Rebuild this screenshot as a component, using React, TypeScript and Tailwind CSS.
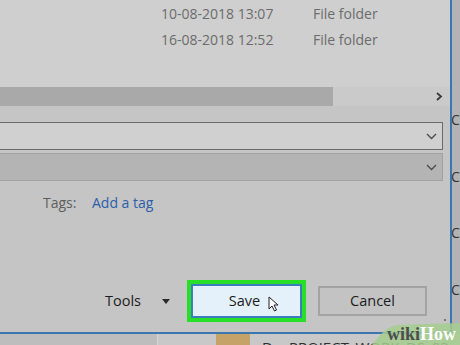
import React from "react";

const font = { fontFamily: '"Open Sans", "Noto Sans", "Liberation Sans", sans-serif' };

function ChevronDown() {
  return (
    <svg width="11" height="7" viewBox="0 0 11 7">
      <polyline points="1,1 5.5,5.5 10,1" fill="none" stroke="#4a4a4a" strokeWidth="1.3" />
    </svg>
  );
}

export default function App() {
  return (
    <div
      className="relative w-[460px] h-[345px] overflow-hidden bg-[#c6c6c6] flex flex-col"
      style={font}
    >
      <div className="flex h-[334px]">
        {/* Dialog */}
        <div className="w-[452px] h-[334px] border-r-2 border-b-2 border-[#3b77ae] bg-[#c5c5c5] flex flex-col">
          {/* file list */}
          <div className="h-[87px] bg-[#cfcfcf] pt-[4px] flex flex-col gap-[6px] text-[14px] text-[#6c6c6c]">
            <div className="flex h-[20px] leading-[20px] pl-[161px]">
              <span className="w-[152px]">10-08-2018 13:07</span>
              <span>File folder</span>
            </div>
            <div className="flex h-[20px] leading-[20px] pl-[161px]">
              <span className="w-[152px]">16-08-2018 12:52</span>
              <span>File folder</span>
            </div>
          </div>
          {/* scrollbar */}
          <div className="h-[19px] flex">
            <div className="w-[333px] bg-[#a9a9a9]" />
            <div className="flex-1 bg-[#cacaca] flex items-center justify-end pr-[7px]">
              <svg width="7" height="9" viewBox="0 0 7 9">
                <polyline points="1,1 5,4.5 1,8" fill="none" stroke="#3a3a3a" strokeWidth="1.8" />
              </svg>
            </div>
          </div>
          {/* combos */}
          <div className="mt-[16px] w-[443px] h-[28px] border border-l-0 border-[#6b6b6b] bg-[#d0d0d0] flex items-center justify-end pr-[5px]">
            <ChevronDown />
          </div>
          <div className="mt-[3px] w-[443px] h-[28px] border border-l-0 border-[#a2a2a2] bg-[#b4b4b4] flex items-center justify-end pr-[5px]">
            <ChevronDown />
          </div>
          {/* tags */}
          <div className="mt-[12px] h-[20px] flex items-center pl-[43px] text-[14px] leading-[20px]">
            <span className="w-[49px] text-[#5e5e5e]">Tags:</span>
            <span className="text-[#2c5ea9]">Add a tag</span>
          </div>
          {/* buttons */}
          <div className="mt-[67px] h-[42px] flex items-center pl-[105px] text-[14.5px] text-[#1c1c1c]">
            <span className="w-[35px]">Tools</span>
            <svg className="ml-[22px]" width="8" height="5" viewBox="0 0 8 5">
              <polygon points="0,0 8,0 4,5" fill="#2a2a2a" />
            </svg>
            <div className="ml-[17px] w-[119px] h-[42px] border-[4px] border-[#27df27] flex">
              <div className="relative flex-1 border-2 border-[#3c7dc0] bg-[#e4f0fa] flex items-center justify-center pl-[1px]">
                <span className="-ml-[5px]">Save</span>
                <svg className="absolute left-[75px] top-[10px]" width="11" height="16" viewBox="0 0 11 16">
                  <path d="M1,1 L1,13 L4,10 L6.5,15 L8.5,14 L6,9 L10,9 Z" fill="#ffffff" stroke="#222" strokeWidth="1" strokeLinejoin="round" />
                </svg>
              </div>
            </div>
            <div className="ml-[12px] w-[109px] h-[30px] border-2 border-[#a3a3a3] bg-[#c3c3c3] flex items-center justify-center">
              Cancel
            </div>
          </div>
        </div>
        {/* right strip */}
        <div className="w-[8px] bg-[#b3b3b3] overflow-hidden flex flex-col text-[14px] leading-[20px] text-[#333]">
          <span className="mt-[110px] -ml-[1px]">C</span>
          <span className="mt-[37px] -ml-[1px]">C</span>
          <span className="mt-[36px] -ml-[1px]">C</span>
          <span className="mt-[37px] -ml-[1px]">C</span>
        </div>
      </div>
      {/* bottom strip: background window */}
      <div className="h-[11px] flex overflow-hidden">
        <div className="w-[157px] bg-[#bdbdbd]" />
        <div className="w-[1px] bg-[#d6d6d6]" />
        <div className="w-[58px] bg-[#c8c8c8]" />
        <div className="w-[34px] bg-[#c5a268]" />
        <div className="flex-1 bg-[#c8c8c8] pl-[12px] text-[15px] leading-[20px] text-[#2f2f2f] whitespace-nowrap flex">
          <span className="relative top-[3px]">D</span>
          <span className="relative top-[3px] ml-[16px]">PROJECT_WORK_DS_03</span>
        </div>
      </div>
      {/* dot */}
      <div className="absolute left-[444px] top-[319px] w-[2px] h-[2px] bg-[#777]" />
      {/* wikiHow watermark */}
      <div className="absolute left-[372px] top-[320px] w-[88px] h-[25px]">
        <svg className="absolute inset-0" width="88" height="25" viewBox="0 0 88 25">
          <path d="M0,25 C8,14 16,6 26,5 L88,3 L88,25 Z" fill="#a5cc8e" fillOpacity="0.85" />
        </svg>
        <div
          className="absolute left-[15px] top-[4px] text-[18px] leading-[20px] font-bold whitespace-nowrap"
          style={{ fontFamily: '"Liberation Serif", "DejaVu Serif", serif' }}
        >
          <span className="text-[#4d4d4d]">wiki</span>
          <span className="text-white">How</span>
        </div>
      </div>
    </div>
  );
}
